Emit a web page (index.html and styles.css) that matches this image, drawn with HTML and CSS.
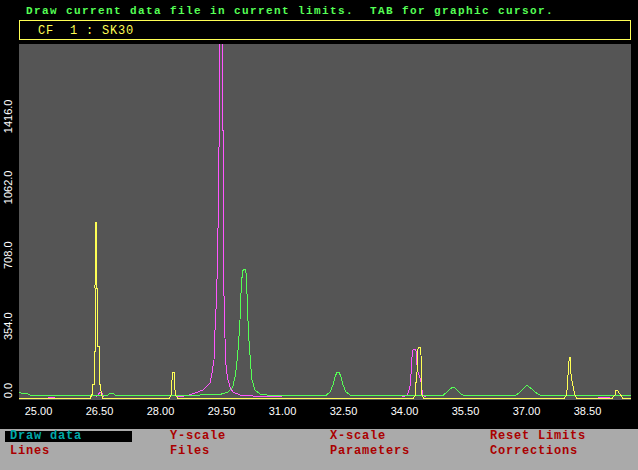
FILE: index.html
```html
<!DOCTYPE html>
<html lang="en">
<head>
  <meta charset="UTF-8">
  <title>Draw data</title>
  <link rel="stylesheet" href="styles.css">
</head>
<body>

  <div class="prompt">Draw current data file in current limits.  TAB for graphic cursor.</div>
  <div class="file-box">CF  1 : SK30</div>

  <!-- viewBox uses screen coordinates so the traces read like the original plot -->
  <svg class="chart" width="638" height="385" viewBox="0 44 638 385">
    <defs>
      <clipPath id="plot"><rect x="19" y="44" width="612" height="356"/></clipPath>
    </defs>
    <rect class="plot-bg" x="19" y="44" width="612" height="356"/>

    <g class="y-labels">
      <text transform="translate(12,99.5) rotate(-90)">1416.0</text>
      <text transform="translate(12,170.5) rotate(-90)">1062.0</text>
      <text transform="translate(12,241.5) rotate(-90)">708.0</text>
      <text transform="translate(12,312.5) rotate(-90)">354.0</text>
      <text transform="translate(12,383) rotate(-90)">0.0</text>
    </g>

    <g class="x-labels">
      <text x="38.5" y="415">25.00</text>
      <text x="99.5" y="415">26.50</text>
      <text x="160.5" y="415">28.00</text>
      <text x="221.5" y="415">29.50</text>
      <text x="282.5" y="415">31.00</text>
      <text x="343.5" y="415">32.50</text>
      <text x="404.5" y="415">34.00</text>
      <text x="465.5" y="415">35.50</text>
      <text x="526.5" y="415">37.00</text>
      <text x="587.5" y="415">38.50</text>
    </g>

    <g clip-path="url(#plot)">
      <!-- magenta file -->
      <polyline class="trace magenta" points="48,397 55,397"/>
      <polyline class="trace magenta" points="96,397 98.5,394.5 100,392 101.5,392 102.5,395 104,397"/>
      <polyline class="trace magenta" points="176,397 188,395.5 195,393 203,390 210,383 212,373 214,360 215,330 216.7,295 218.3,213 219.3,120 219.3,44"/>
      <polyline class="trace magenta" points="222,44 222,60 222.7,60 222.7,130 223.3,130 223.3,260 224.7,330 226,365 227.3,377 230,387 233,392 240,395 260,396.5 282,397"/>
      <polyline class="trace magenta" points="402,397 407.5,395 409.5,388 410.7,383 411.5,360 412.3,355 413,350 414.3,349 415.3,349 416.3,352 417.3,370 420.7,380 422.7,395 426,397"/>
      <polyline class="trace magenta" points="598,397 610,397"/>

      <!-- green file -->
      <polyline class="trace green" points="19,392 21,393 24,394 26,393 28,394 30,395 108,395 110,393 113,393 115,395 200,395 220,394.5 228,392 232.7,387 235,377 236.7,365 238.3,347 240,320 241,293 242.3,273 243.3,269.5 245,269.5 246,273 247.3,300 248.3,330 249.3,345 250.7,365 252,380 255,390 260,394 270,395.5 326,395.5 330,392 333,385 335,377 337,372 339,372 341,377 343,385 346,392 351,395.5 443,395.5 447,392 450,389 453,387 455,388 458,391 461,394 464,395.5 515,395.5 519,393 522,390 525,387 527,385 529,387 532,389 535,392 538,394 541,395.5 631,395.5"/>

      <!-- yellow file -->
      <polyline class="trace yellow" points="19,398.5 90,398.5 92.3,394 92.5,384 94,384 94,351 95,351 95,288 95.3,222 96,222 96.5,242 96.7,288 97.7,288 97.7,346 99,346 99,384 100,384 101.7,395 103,398.5 169,398.5 171.5,394 172,380 172.5,373 174,372 174.5,380 175,390 176,396 178,398.5 413,398.5 415.7,395 415.7,382 416.7,382 417.7,350 419,347 420,347 421,355 422,395 424,398.5 564,398.5 566.7,395 568.3,371 569.3,357 570,357 570.7,371.7 572.3,383 575,395 577,398.5 612,398.5 615,395 616,390 617.5,390 619,393 620.7,395 623,398.5 631,398.5"/>
    </g>
  </svg>

  <div class="menu">
    <div class="menu-item active">Draw data</div>
    <div class="menu-item">Y-scale</div>
    <div class="menu-item">X-scale</div>
    <div class="menu-item">Reset Limits</div>
    <div class="menu-item">Lines</div>
    <div class="menu-item">Files</div>
    <div class="menu-item">Parameters</div>
    <div class="menu-item">Corrections</div>
  </div>

</body>
</html>
```

FILE: styles.css
```css
body { margin: 0; width: 638px; height: 470px; overflow: hidden; background: #000; font-family: "Liberation Mono", "DejaVu Sans Mono", monospace; }

.prompt { height: 18px; padding: 2px 0 0 26px; color: #55ff55; font-size: 11px; font-weight: bold; line-height: 18px; letter-spacing: 1.4px; white-space: pre; }

.file-box {
  box-sizing: border-box;
  width: 612px;
  height: 20px;
  margin-left: 19px;
  padding: 1px 0 0 18px;
  border: 1px solid #ffff55;
  color: #ffff55;
  font-size: 12px;
  line-height: 18px;
  letter-spacing: 0.8px;
  white-space: pre;
  overflow: hidden;
}

.chart { display: block; margin-top: 4px; }
.plot-bg { fill: #555555; }
.y-labels text, .x-labels text { fill: #fff; font-family: "Liberation Sans", Arial, sans-serif; font-size: 11px; }
.y-labels text { text-anchor: end; }
.x-labels text { text-anchor: middle; }

.trace { fill: none; stroke-width: 1; shape-rendering: crispEdges; }
.magenta { stroke: #ff55ff; }
.green { stroke: #55ff55; }
.yellow { stroke: #ffff55; }

/* menu bar at the bottom */
.menu {
  box-sizing: border-box;
  height: 41px;
  padding: 2px 0 0 5px;
  background: #aaaaaa;
  display: grid;
  grid-template-columns: repeat(4, 160px);
  grid-auto-rows: 15px;
}
.menu-item {
  box-sizing: border-box;
  width: 127px;
  height: 11px;
  padding-left: 5px;
  color: #aa0000;
  font-size: 12px;
  font-weight: bold;
  line-height: 11px;
  letter-spacing: 0.8px;
  white-space: pre;
}
.menu-item.active { background: #000; color: #00aaaa; }
```
